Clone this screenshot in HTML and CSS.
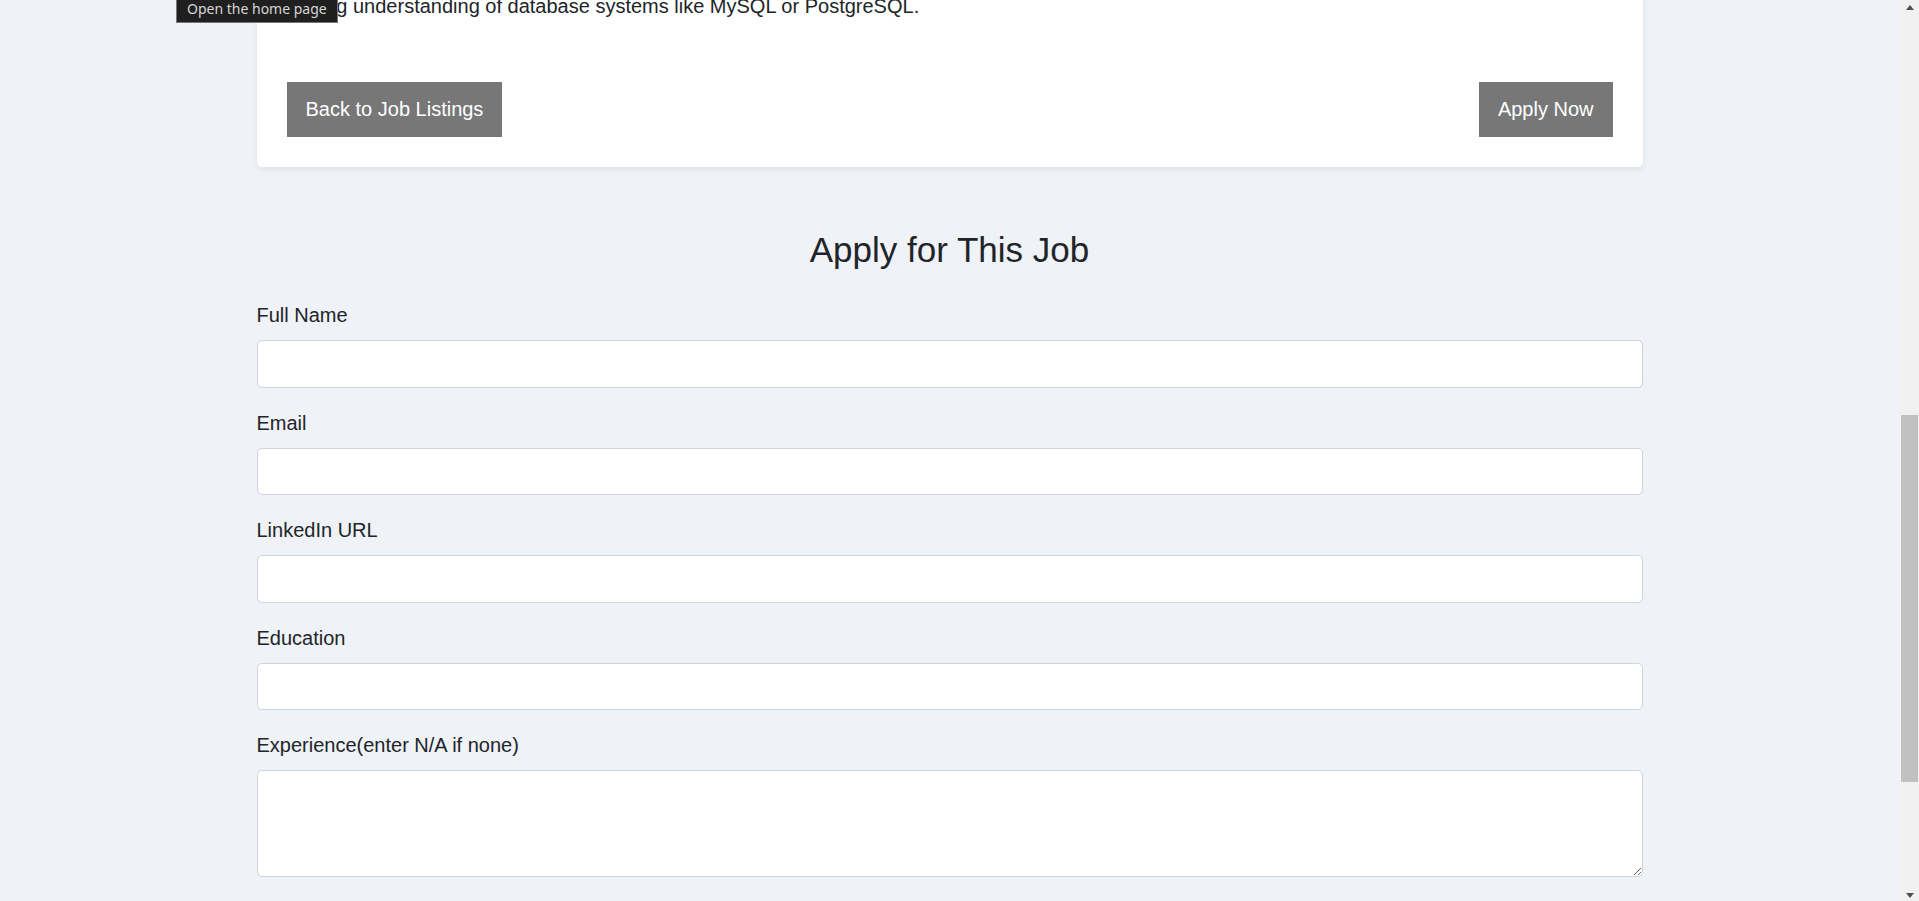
FILE: index.html
```html
<!DOCTYPE html>
<html lang="en">
<head>
<meta charset="utf-8">
<title>Job Details</title>
<link rel="stylesheet" href="styles.css">
</head>
<body>
<div class="screen">
  <div class="viewport">
    <main class="container">
      <section class="card">
        <ul class="reqs">
          <li>Strong understanding of database systems like MySQL or PostgreSQL.</li>
        </ul>
        <div class="actions">
          <a class="btn" href="#">Back to Job Listings</a>
          <a class="btn" href="#">Apply Now</a>
        </div>
      </section>

      <section class="apply">
        <h2 class="apply-title">Apply for This Job</h2>
        <form class="apply-form">
          <div class="field">
            <label for="name">Full Name</label>
            <input id="name" type="text">
          </div>
          <div class="field">
            <label for="email">Email</label>
            <input id="email" type="email">
          </div>
          <div class="field">
            <label for="linkedin">LinkedIn URL</label>
            <input id="linkedin" type="url">
          </div>
          <div class="field">
            <label for="education">Education</label>
            <input id="education" type="text">
          </div>
          <div class="field">
            <label for="experience">Experience(enter N/A if none)</label>
            <textarea id="experience"></textarea>
          </div>
        </form>
      </section>
    </main>
  </div>
  <div class="scrollbar">
    <div class="sb-btn sb-up"><span class="tri-up"></span></div>
    <div class="sb-track"><div class="sb-thumb"></div></div>
    <div class="sb-btn sb-down"><span class="tri-down"></span></div>
  </div>
</div>
<div class="tooltip">Open the home page</div>
</body>
</html>
```

FILE: styles.css
```css
* { box-sizing: border-box; }

html, body {
  margin: 0;
  padding: 0;
}

body {
  font-family: "Liberation Sans", Arial, sans-serif;
  color: #212529;
  background: #eff2f7;
  position: relative;
}

.screen {
  display: flex;
  height: 901px;
  overflow: hidden;
}

.viewport {
  flex: 1;
  overflow: hidden;
  background: #eff2f7;
}

.container {
  width: 1386px;
  margin: 0 auto;
}

.card {
  background: #ffffff;
  border-radius: 0 0 5px 5px;
  box-shadow: 0 2px 6px rgba(0, 0, 0, 0.08);
  padding: 0 30px 30px;
  margin-top: -9px;
}

.reqs {
  list-style: none;
  margin: 0;
  padding: 0 0 0 2px;
  font-size: 20px;
  line-height: 30px;
  color: #212529;
}

.actions {
  display: flex;
  justify-content: space-between;
  margin-top: 61px;
}

.btn {
  display: block;
  background: #777777;
  color: #ffffff;
  text-decoration: none;
  font-size: 20px;
  line-height: 23px;
  padding: 16px 19px;
}

.apply-title {
  margin: 62px 0 29px;
  font-size: 35px;
  line-height: 42px;
  font-weight: 400;
  text-align: center;
  color: #212529;
}

.field {
  margin-bottom: 20px;
}

.field label {
  display: block;
  font-size: 20px;
  line-height: 30px;
  margin-bottom: 10px;
  color: #212529;
}

.field input,
.field textarea {
  display: block;
  width: 100%;
  height: 47.5px;
  border: 1px solid #cfd4db;
  border-radius: 5px;
  background: #ffffff;
  font-family: "Liberation Sans", Arial, sans-serif;
  font-size: 20px;
  padding: 0 12px;
}

.field textarea {
  height: 106.5px;
  padding: 10px 12px;
}

/* fake browser scrollbar */
.scrollbar {
  width: 20px;
  background: #f1f1f1;
  display: flex;
  flex-direction: column;
}

.sb-btn {
  height: 20px;
  display: flex;
  justify-content: center;
  padding-left: 1px;
}

.sb-up { padding-top: 5px; }
.sb-down { padding-top: 12px; }

.tri-up {
  width: 0;
  height: 0;
  border-left: 4.5px solid transparent;
  border-right: 4.5px solid transparent;
  border-bottom: 5px solid #505050;
}

.tri-down {
  width: 0;
  height: 0;
  border-left: 4.5px solid transparent;
  border-right: 4.5px solid transparent;
  border-top: 5px solid #505050;
}

.sb-track {
  flex: 1;
  padding: 0 1px 0 2px;
}

.sb-thumb {
  margin-top: 395px;
  height: 367px;
  background: #c1c1c1;
}

.tooltip {
  position: absolute;
  left: 176px;
  top: 0;
  height: 23px;
  padding: 0 10px;
  background: #1f1f1f;
  border: 1px solid #767676;
  border-top: none;
  color: #d6d6d6;
  font-family: "Noto Sans", "Open Sans", sans-serif;
  font-size: 14px;
  line-height: 17px;
  white-space: nowrap;
}
```
